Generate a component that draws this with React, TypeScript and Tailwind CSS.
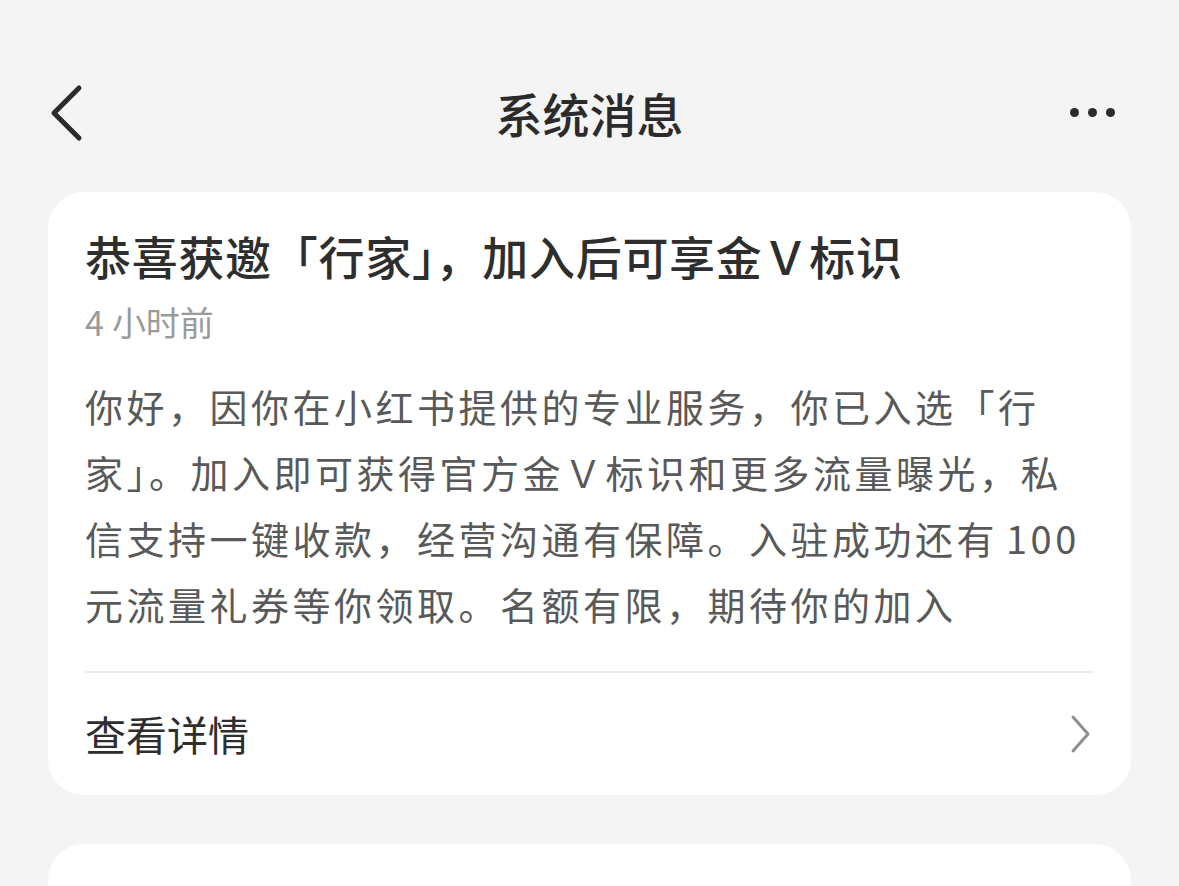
const cjk = { fontFamily: '"Noto Sans CJK SC", "Noto Sans", sans-serif' };

function Header() {
  return (
    <header className="relative flex h-[192px] items-start justify-center pt-[83px]">
      <button className="absolute left-[48px] top-[84px]">
        <svg width="40" height="58" viewBox="0 0 40 58" fill="none">
          <path d="M31 4L6 29L31 54" stroke="#2b2b2b" strokeWidth="5" strokeLinecap="round" strokeLinejoin="round" />
        </svg>
      </button>
      <h1 className="text-[47px] leading-[60px] font-medium text-[#2b2b2b]">系统消息</h1>
      <button className="absolute right-[64px] top-[108px] flex items-center gap-[9px]">
        <span className="h-[9px] w-[9px] rounded-full bg-[#2b2b2b]" />
        <span className="h-[9px] w-[9px] rounded-full bg-[#2b2b2b]" />
        <span className="h-[9px] w-[9px] rounded-full bg-[#2b2b2b]" />
      </button>
    </header>
  );
}

function MessageCard() {
  return (
    <section className="rounded-[36px] bg-white px-[37px] pt-[33px]">
      <h2 className="text-[46px] leading-[60px] font-medium tracking-[0.7px] text-[#2e2e2e]">
        恭喜获邀「行家」，加入后可享金Ｖ标识
      </h2>
      <p className="mt-[16px] text-[34px] leading-[42px] text-[#9a9a9a]">
        4<span className="ml-[8px]">小时前</span>
      </p>
      <p className="mt-[30px] text-[38px] leading-[66px] tracking-[3.5px] text-[#595959]">
        你好，因你在小红书提供的专业服务，你已入选「行
        <br />
        家」。加入即可获得官方金Ｖ标识和更多流量曝光，私
        <br />
        信支持一键收款，经营沟通有保障。入驻成功还有<span className="ml-[8px]">100</span>
        <br />
        元流量礼券等你领取。名额有限，期待你的加入
      </p>
      <div className="mt-[34px] h-[2px] bg-[#ececec]" />
      <button className="flex h-[122px] w-full items-center justify-between">
        <span className="text-[41px] text-[#2e2e2e]">查看详情</span>
        <svg width="24" height="40" viewBox="0 0 24 40" fill="none" className="mr-[1px]">
          <path d="M4 3L19 20L4 37" stroke="#8f8f8f" strokeWidth="3" strokeLinecap="round" strokeLinejoin="round" />
        </svg>
      </button>
    </section>
  );
}

export default function App() {
  return (
    <div className="h-[886px] overflow-hidden bg-[#f4f4f4]" style={cjk}>
      <Header />
      <main className="flex flex-col gap-[49px] px-[48px]">
        <MessageCard />
        <section className="h-[120px] rounded-[36px] bg-white" />
      </main>
    </div>
  );
}
